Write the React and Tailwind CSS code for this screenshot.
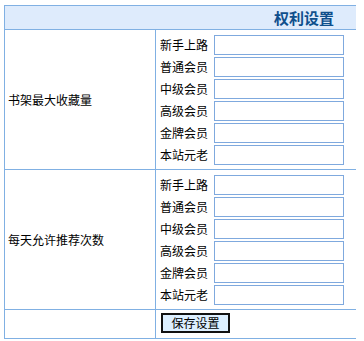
import React from "react";

const levels = ["新手上路", "普通会员", "中级会员", "高级会员", "金牌会员", "本站元老"];

function Section({ title }) {
  return (
    <div className="flex border-b border-[#80b0e3]">
      <div className="w-[151px] border-r border-[#80b0e3] flex items-center pl-[3px] text-[12px] text-black">
        {title}
      </div>
      <div className="flex flex-col gap-[2px] pt-[5px] pb-[4px] pl-[4px]">
        {levels.map((l) => (
          <div key={l} className="flex items-center h-[20px]">
            <span className="w-[54px] text-[12px] text-black leading-none">{l}</span>
            <input
              type="text"
              className="w-[130px] h-[20px] border border-[#7fa9de] bg-white outline-none"
            />
          </div>
        ))}
      </div>
    </div>
  );
}

export default function App() {
  return (
    <div
      className="bg-white w-[364px] h-[341px] pt-[5px] pl-[4px]"
      style={{ fontFamily: '"Noto Sans CJK SC", "Noto Sans", sans-serif' }}
    >
      <div className="w-[352px] border-t border-l border-[#80b0e3]">
        <div className="h-[24px] bg-[#deebfc] border-b border-[#80b0e3] flex items-center justify-end pr-[22px]">
          <span className="text-[15px] font-bold text-[#0f4f8c] leading-none">权利设置</span>
        </div>
        <Section title="书架最大收藏量" />
        <Section title="每天允许推荐次数" />
        <div className="flex border-b border-[#80b0e3] h-[29px]">
          <div className="w-[151px] border-r border-[#80b0e3]" />
          <div className="pl-[5px] pt-[3px]">
            <button className="w-[69px] h-[20px] border-2 border-[#111] bg-[#dcefff] text-[12px] text-black leading-none flex items-center justify-center">
              保存设置
            </button>
          </div>
        </div>
      </div>
    </div>
  );
}
